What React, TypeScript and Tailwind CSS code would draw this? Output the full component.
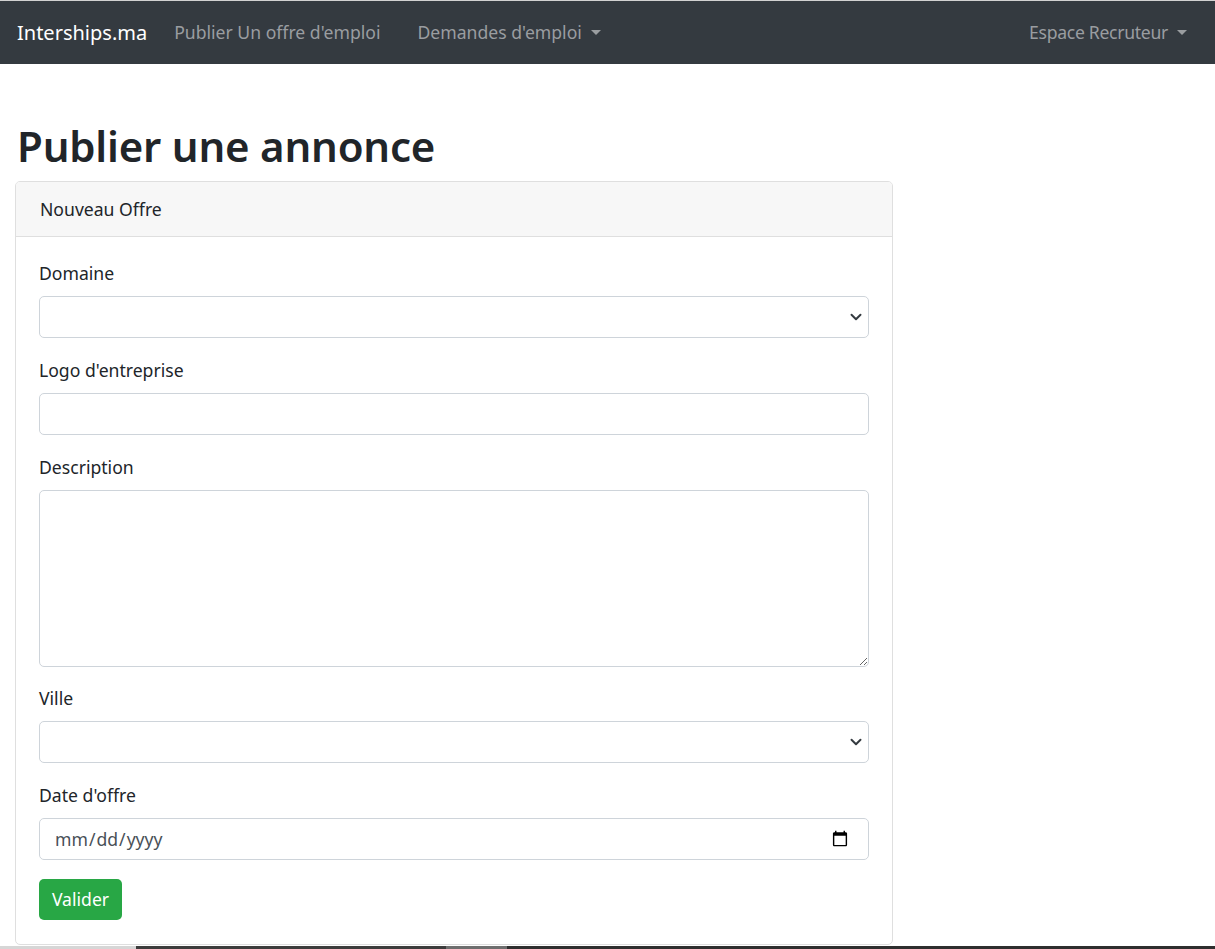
import React from "react";

const font = { fontFamily: '"Noto Sans", "Open Sans", Arial, sans-serif' };

function Caret() {
    return <span className="inline-block ml-[9px] align-middle w-0 h-0 border-x-[5px] border-x-transparent border-t-[5px] border-t-[#9a9da0] relative top-[-2px]" />;
}

function Chevron() {
    return (
        <svg width="12" height="12" viewBox="0 0 16 16" className="pointer-events-none">
            <path d="M2 5l6 6 6-6" fill="none" stroke="#343a40" strokeWidth="2.6" strokeLinecap="round" strokeLinejoin="round" />
        </svg>
    );
}

function Label({ text }: { text: string }) {
    return <label className="block h-[26px] leading-[26px] mb-[10px] text-[#212529]">{text}</label>;
}

function SelectField({ label }: { label: string }) {
    return (
        <div className="mb-[19px]">
            <Label text={label} />
            <div className="relative">
                <select className="appearance-none block w-full h-[42px] border border-[#ced4da] rounded-[5px] bg-white px-[13px] text-[#495057] outline-none">
                    <option></option>
                </select>
                <span className="absolute right-[7px] top-[15px]"><Chevron /></span>
            </div>
        </div>
    );
}

export default function App() {
    return (
        <div className="min-h-[949px] bg-white text-[17.6px] text-[#212529] flex flex-col" style={font}>
            <div className="h-px bg-[#d2d2d2]" />
            <nav className="h-[63px] bg-[#343a40] flex items-center pl-[17px] pr-[28px]">
                <span className="text-white text-[20px] mr-[27px]">Interships.ma</span>
                <a className="text-[#9a9da0] mr-[37px]">Publier Un offre d'emploi</a>
                <a className="text-[#9a9da0]">Demandes d'emploi<Caret /></a>
                <a className="text-[#9a9da0] ml-auto tracking-[-0.3px]">Espace Recruteur<Caret /></a>
            </nav>

            <div className="pl-[15px]">
                <h1 className="mt-[55px] mb-[9px] h-[53px] leading-[53px] text-[42px] font-semibold tracking-[-0.2px] text-[#212529] pl-[2px]">Publier une annonce</h1>

                <div className="w-[878px] border border-[#dfdfdf] rounded-[5px] overflow-hidden">
                    <div className="h-[55px] bg-[#f7f7f7] border-b border-[#dfdfdf] flex items-center px-[24px]">Nouveau Offre</div>
                    <div className="px-[23px] pt-[23px] pb-[24px]">
                        <SelectField label="Domaine" />

                        <div className="mb-[19px]">
                            <Label text="Logo d'entreprise" />
                            <input type="text" className="block w-full h-[42px] border border-[#ced4da] rounded-[5px] px-[13px] outline-none" />
                        </div>

                        <div className="mb-[18px]">
                            <Label text="Description" />
                            <textarea className="block w-full h-[177px] border border-[#ced4da] rounded-[5px] px-[13px] py-[7px] outline-none" />
                        </div>

                        <SelectField label="Ville" />

                        <div className="mb-[19px]">
                            <Label text="Date d'offre" />
                            <input type="date" className="block w-full h-[42px] border border-[#ced4da] rounded-[5px] pl-[14px] pr-[17px] text-[#495057] outline-none" />
                        </div>

                        <button className="h-[41px] w-[83px] bg-[#28a745] text-white rounded-[5px]">Valider</button>
                    </div>
                </div>
            </div>

            <div className="mt-auto h-[3px] flex">
                <div className="w-[136px] bg-[#d6d6d6]" />
                <div className="w-[310px] bg-[#3c3c3c]" />
                <div className="w-[61px] bg-[#6e6e6e]" />
                <div className="flex-1 bg-[#2e2e2e]" />
            </div>
        </div>
    );
}
